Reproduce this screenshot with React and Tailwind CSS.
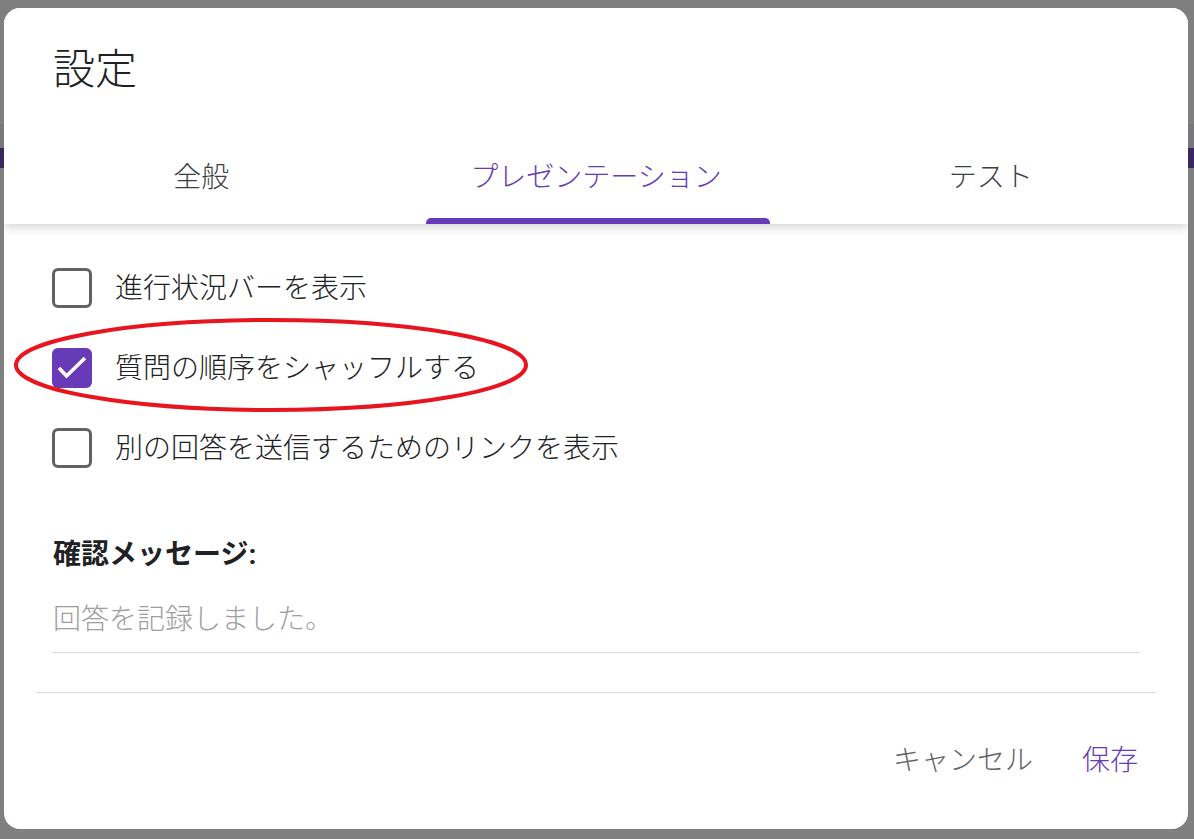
import React from "react";

const font = { fontFamily: "Roboto, 'Noto Sans CJK JP', sans-serif" };

const options = [
  { id: "progress", label: "進行状況バーを表示", checked: false },
  { id: "shuffle", label: "質問の順序をシャッフルする", checked: true },
  { id: "another", label: "別の回答を送信するためのリンクを表示", checked: false },
];

const tabs = [
  { id: "general", label: "全般" },
  { id: "presentation", label: "プレゼンテーション" },
  { id: "quiz", label: "テスト" },
];

function Checkbox({ checked }) {
  if (checked) {
    return (
      <div className="w-[40px] h-[40px] rounded-[6px] bg-[#673ab7] flex items-center justify-center shrink-0">
        <svg width="40" height="40" viewBox="0 0 40 40" fill="none">
          <polyline points="7,20 14.5,28 33,10" stroke="#fff" strokeWidth="3.6" />
        </svg>
      </div>
    );
  }
  return <div className="w-[40px] h-[40px] rounded-[6px] border-[3.5px] border-[#5f6368] shrink-0" />;
}

export default function App() {
  const selectedTab = "presentation";

  return (
    <div className="relative w-[1194px] h-[839px] bg-[#7f7f7f] overflow-hidden" style={font}>
      {/* page behind the overlay */}
      <div className="absolute left-0 right-0 top-[124px] h-[24px] bg-[#77777c]" />
      <div className="absolute left-0 right-0 top-[148px] h-[20px] bg-[#3a2762]" />

      <div className="relative pt-[8px] pl-[4px]">
        <div className="relative w-[1184px] h-[821px] bg-white rounded-[16px] flex flex-col overflow-hidden">
          {/* header */}
          <div className="relative z-10 bg-white shadow-[0_3px_10px_rgba(0,0,0,0.18)]">
            <div className="h-[120px] pl-[49px] pt-[34px]">
              <h1 className="text-[42px] leading-[56px] text-[#202124] font-light">設定</h1>
            </div>
            <div className="flex h-[96px]">
              {tabs.map((tab) => {
                const active = tab.id === selectedTab;
                return (
                  <div key={tab.id} className="relative flex-1 flex items-center justify-center pt-[3px]">
                    <span
                      className={`text-[28px] leading-[40px] font-light ${active ? "text-[#673ab7]" : "text-[#3c4043]"}`}
                    >
                      {tab.label}
                    </span>
                    {active && (
                      <div className="absolute bottom-0 left-[27px] right-[23px] h-[6px] rounded-t-[5px] bg-[#673ab7]" />
                    )}
                  </div>
                );
              })}
            </div>
          </div>

          {/* body */}
          <div className="relative px-[48px] pt-[24px]">
            {options.map((opt) => (
              <div key={opt.id} className="h-[80px] flex items-center gap-[23px]">
                <Checkbox checked={opt.checked} />
                <span className="text-[28px] leading-[40px] text-[#202124] font-light pt-[2px]">{opt.label}</span>
              </div>
            ))}

            <div className="mt-[47px] text-[28px] leading-[40px] font-bold text-[#202124] pl-[1px]">
              確認メッセージ:
            </div>
            <div className="pt-[25px] pb-[12px] border-b border-[#dadce0]">
              <span className="text-[28px] leading-[40px] text-[#9e9e9e] font-light pl-[1px]">回答を記録しました。</span>
            </div>

            {/* annotation */}
            <svg
              className="absolute left-[4px] top-[90px] pointer-events-none"
              width="526"
              height="100"
              viewBox="0 0 526 100"
              fill="none"
            >
              <ellipse cx="263" cy="51" rx="255" ry="45" stroke="#e8141f" strokeWidth="4" />
            </svg>
          </div>

          <div className="mx-[32px] mt-[39px] border-t border-[#dadce0]" />

          {/* actions */}
          <div className="flex-1 flex items-center justify-end gap-[49px] pr-[50px]">
            <span className="text-[28px] leading-[40px] text-[#5f6368] font-light">キャンセル</span>
            <span className="text-[28px] leading-[40px] text-[#673ab7] font-light">保存</span>
          </div>
        </div>
      </div>
    </div>
  );
}
